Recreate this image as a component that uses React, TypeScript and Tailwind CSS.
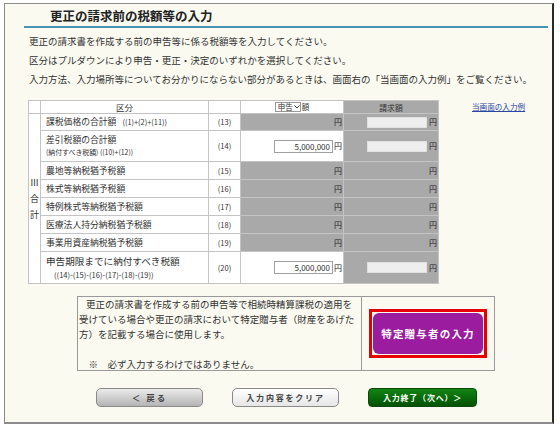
import React from 'react';

type Row = {
  no: string;
  label: React.ReactNode;
  h: string;
  shinkoku?: string;
  seikyuInput?: boolean;
};

const rows: Row[] = [
  {
    no: '(13)',
    h: 'h-[17px]',
    label: (
      <span className="text-[8.8px]">
        課税価格の合計額<span className="ml-[6px] text-[7.4px]">((1)+(2)+(11))</span>
      </span>
    ),
    seikyuInput: true,
  },
  {
    no: '(14)',
    h: 'h-[31px]',
    label: (
      <div className="flex flex-col leading-[13px]">
        <span className="text-[8.8px]">差引税額の合計額</span>
        <span className="text-[6.9px]">(納付すべき税額) ((10)+(12))</span>
      </div>
    ),
    shinkoku: '5,000,000',
    seikyuInput: true,
  },
  { no: '(15)', h: 'h-[18px]', label: <span className="text-[8.8px]">農地等納税猶予税額</span> },
  { no: '(16)', h: 'h-[18px]', label: <span className="text-[8.8px]">株式等納税猶予税額</span> },
  { no: '(17)', h: 'h-[18px]', label: <span className="text-[8.8px]">特例株式等納税猶予税額</span> },
  { no: '(18)', h: 'h-[18px]', label: <span className="text-[8.8px]">医療法人持分納税猶予税額</span> },
  { no: '(19)', h: 'h-[18px]', label: <span className="text-[8.8px]">事業用資産納税猶予税額</span> },
  {
    no: '(20)',
    h: 'h-[32px]',
    label: (
      <div className="flex flex-col leading-[14px]">
        <span className="text-[9.6px]">申告期限までに納付すべき税額</span>
        <span className="pl-[8px] text-[7.6px]">((14)-(15)-(16)-(17)-(18)-(19))</span>
      </div>
    ),
    shinkoku: '5,000,000',
    seikyuInput: true,
  },
];

const cell = 'border border-[#c4c4c4] p-0';

export default function App() {
  return (
    <div className="w-[560px] h-[431px] bg-white pt-[3px] pl-[4px] font-['Noto_Sans_CJK_JP',sans-serif] text-[#333]">
      <div className="w-[550px] h-[421px] border-t border-l border-[#8c8c8c] border-r-2 border-r-[#2a2a2a] border-b-2 border-b-[#8c8c8c] bg-[#fafaf0] flex flex-col">
        {/* Title */}
        <div className="ml-[19px] w-[524px] h-[24px] border-b-2 border-[#4a94b8] pl-[26px] pt-[5px]">
          <h1 className="text-[12.5px] leading-[14px] font-bold text-[#222]">更正の請求前の税額等の入力</h1>
        </div>

        {/* Description */}
        <div className="ml-[24px] mt-[4px] text-[9.5px] leading-[19px] text-[#333]">
          <p>更正の請求書を作成する前の申告等に係る税額等を入力してください。</p>
          <p>区分はプルダウンにより申告・更正・決定のいずれかを選択してください。</p>
          <p>入力方法、入力場所等についてお分かりにならない部分があるときは、画面右の「当画面の入力例」をご覧ください。</p>
        </div>

        {/* Table + link */}
        <div className="ml-[23px] mt-[11px] flex items-start">
          <table className="border-collapse table-fixed w-[410px] bg-white text-[8px] leading-[10px]">
            <colgroup>
              <col className="w-[12px]" />
              <col className="w-[168px]" />
              <col className="w-[32px]" />
              <col className="w-[103px]" />
              <col className="w-[95px]" />
            </colgroup>
            <thead>
              <tr className="h-[13px]">
                <th className={cell}></th>
                <th className={`${cell} text-[8.5px] font-normal leading-[11px]`}>区分</th>
                <th className={cell}></th>
                <th className={cell}>
                  <div className="flex items-center justify-center">
                    <div className="flex items-center h-[10px] w-[26px] border border-[#9a9a9a] bg-white pl-[2px]">
                      <span className="text-[7.5px] leading-[8px] font-normal">申告</span>
                      <svg width="6" height="4" viewBox="0 0 6 4" className="ml-[1px]">
                        <path d="M0.5 0.5 L3 3 L5.5 0.5" fill="none" stroke="#444" strokeWidth="1" />
                      </svg>
                    </div>
                    <span className="text-[7.5px] leading-[8px] font-normal ml-[1px]">額</span>
                  </div>
                </th>
                <th className={`${cell} bg-[#a9a9a9] text-[7.8px] font-normal leading-[11px]`}>請求額</th>
              </tr>
            </thead>
            <tbody>
              {rows.map((r, i) => (
                <tr key={r.no} className={r.h}>
                  {i === 0 && (
                    <td rowSpan={rows.length} className={`${cell} align-middle text-center`}>
                      <div className="flex flex-col items-center text-[9px] leading-[16px]">
                        <span>Ⅲ</span>
                        <span>合</span>
                        <span>計</span>
                      </div>
                    </td>
                  )}
                  <td className={`${cell} pl-[5px] align-middle`}>{r.label}</td>
                  <td className={`${cell} text-center text-[7.5px] align-middle`}>{r.no}</td>
                  <td className={`${cell} align-middle ${r.shinkoku ? 'bg-white' : 'bg-[#a9a9a9]'}`}>
                    <div className="flex items-center justify-end pr-[1px]">
                      {r.shinkoku && (
                        <input
                          readOnly
                          value={r.shinkoku}
                          className="w-[59px] h-[13px] border border-[#a0a0a0] bg-white text-right text-[8px] leading-[11px] pr-[2px] mr-[1px] outline-none"
                        />
                      )}
                      <span className="text-[8px] leading-[10px] text-[#222]">円</span>
                    </div>
                  </td>
                  <td className={`${cell} bg-[#a9a9a9] align-middle`}>
                    <div className="flex items-center justify-end pr-[1px]">
                      {r.seikyuInput && (
                        <input
                          readOnly
                          value=""
                          className="w-[60px] h-[11px] bg-[#eeeeee] border border-[#e0e0e0] mr-[2px] text-[8px] leading-[9px] outline-none"
                        />
                      )}
                      <span className="text-[8px] leading-[10px] text-[#222]">円</span>
                    </div>
                  </td>
                </tr>
              ))}
            </tbody>
          </table>
          <a href="#" className="ml-[33px] mt-[2px] text-[7.6px] leading-[10px] text-[#2a45a5] underline">
            当画面の入力例
          </a>
        </div>

        {/* Info box */}
        <div className="ml-[72px] mt-[12px] w-[418px] h-[75px] border border-[#9a9a9a] flex">
          <div className="w-[284px] border-r border-[#9a9a9a] pl-[1px] text-[9.5px] leading-[15px] text-[#333]">
            <p className="indent-[7px]">更正の請求書を作成する前の申告等で相続時精算課税の適用を</p>
            <p>受けている場合や更正の請求において特定贈与者（財産をあげた</p>
            <p>方）を記載する場合に使用します。</p>
            <p>&nbsp;</p>
            <p>　※　必ず入力するわけではありません。</p>
          </div>
          <div className="flex-1 flex items-center justify-center">
            <div className="border-[3px] border-[#e60000] p-[1px]">
              <button className="w-[110px] h-[41px] rounded-[6px] bg-[#9b1c9f] text-white text-[10.5px] font-bold tracking-[1.2px]">
                特定贈与者の入力
              </button>
            </div>
          </div>
        </div>

        {/* Buttons */}
        <div className="ml-[91px] mt-[17px] flex gap-[29px]">
          <button className="w-[107px] h-[19px] rounded-[5px] border border-[#8a8a8a] bg-gradient-to-b from-[#ececec] to-[#b4b4b4] text-[8.5px] font-bold text-[#444] tracking-[2px] leading-none">
            ＜ 戻る
          </button>
          <button className="w-[107px] h-[19px] rounded-[5px] border border-[#8a8a8a] bg-gradient-to-b from-[#ffffff] to-[#e6e6e6] text-[8px] font-bold text-[#444] tracking-[1.8px] leading-none">
            入力内容をクリア
          </button>
          <button className="w-[109px] h-[19px] rounded-[4px] border border-[#0a4a0a] bg-gradient-to-b from-[#138513] to-[#035203] text-[8px] font-bold text-white tracking-[0.8px] leading-none">
            入力終了（次へ）＞
          </button>
        </div>
      </div>
    </div>
  );
}
